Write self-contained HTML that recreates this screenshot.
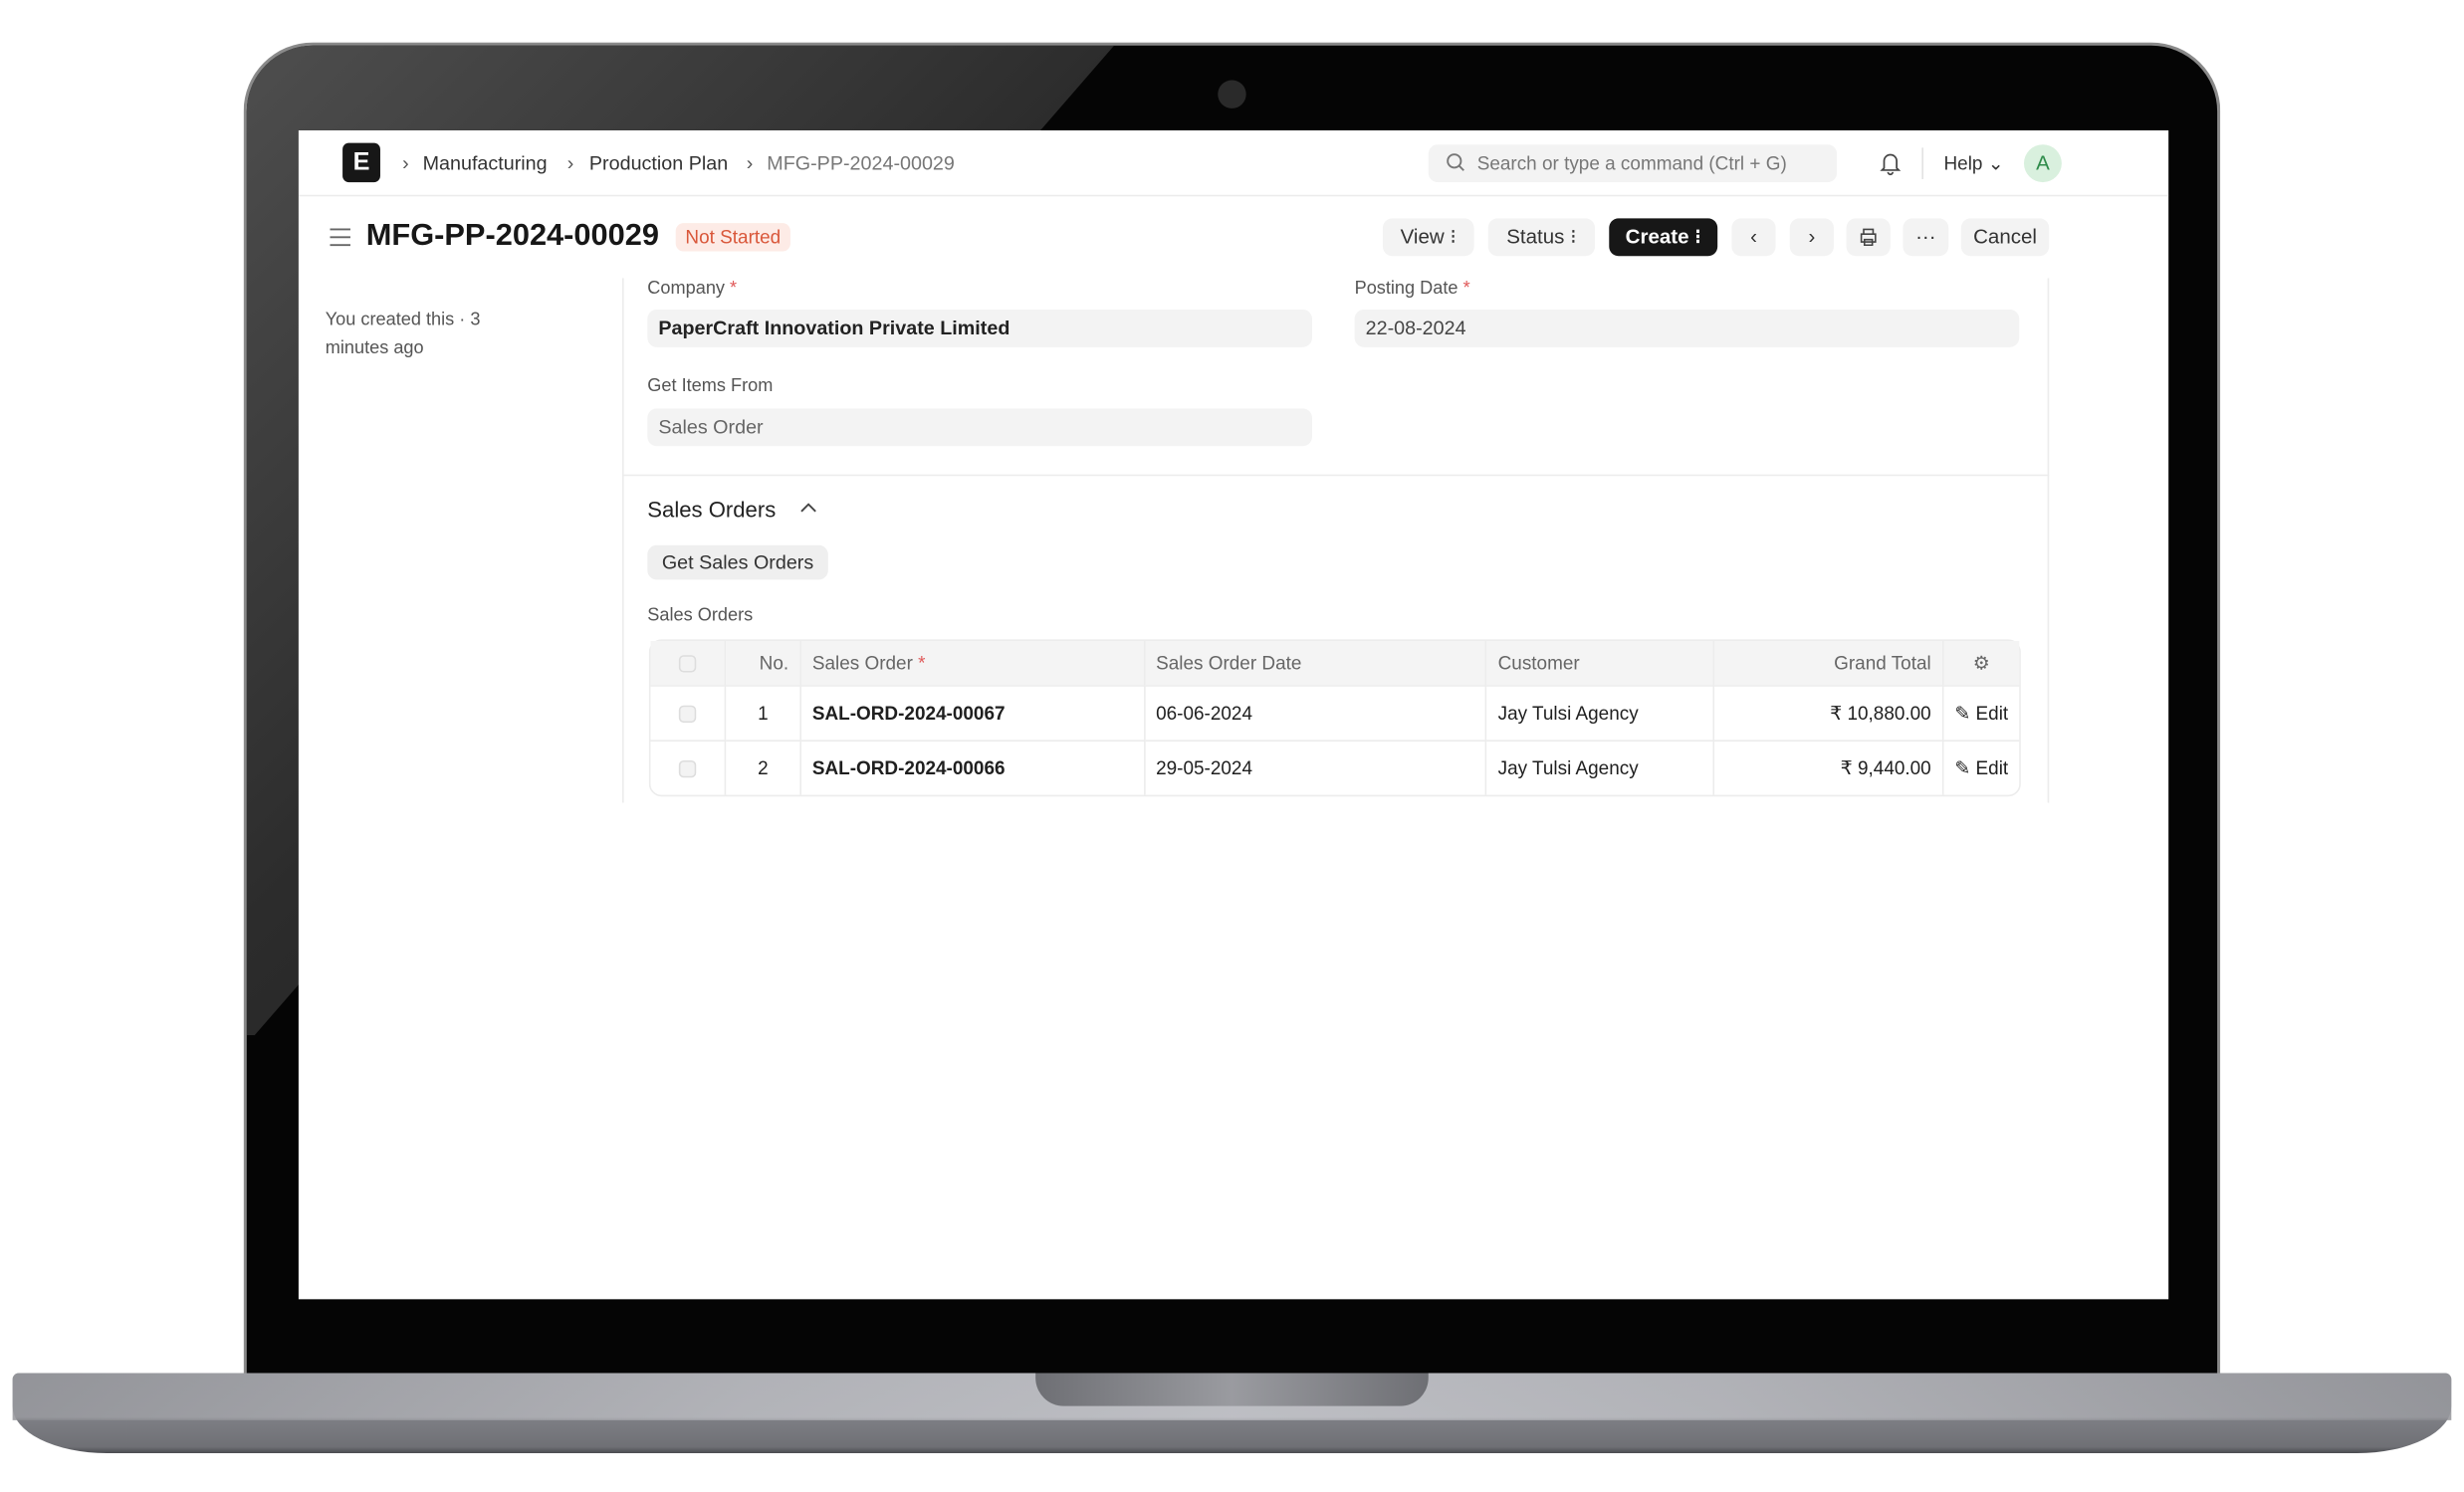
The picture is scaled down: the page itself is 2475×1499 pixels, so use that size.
<!DOCTYPE html>
<html><head><meta charset="utf-8"><style>
*{margin:0;padding:0;box-sizing:border-box}
html,body{width:2475px;height:1499px;overflow:hidden;background:#fff}
#w{position:absolute;left:0;top:0;width:1568px;height:950px;transform:scale(1.5784);transform-origin:0 0;font-family:"Liberation Sans",sans-serif;}
.a{position:absolute}
.bz{left:155px;top:27px;width:1258px;height:860px;background:#050505;border-radius:44px 44px 0 0;border:2px solid #8a8a8a;border-bottom:none;overflow:hidden}
.gl{left:0;top:0;width:700px;height:700px;background:linear-gradient(135deg,#4e4e4e 0%,#2c2c2c 40%,#141414 100%);clip-path:polygon(0 0,552px 0,5px 630px,0 630px)}
.scr{left:190px;top:83px;width:1190px;height:744px;background:#fff;overflow:hidden;color:#1f1f1f}
.t{position:absolute;white-space:nowrap;font-size:12.5px;line-height:1}
.btn{position:absolute;top:56px;height:24px;background:#f3f3f3;border-radius:6px;font-size:13px;line-height:24px;color:#333;text-align:center}
.inp{position:absolute;height:24px;background:#f3f3f3;border-radius:6px;font-size:12.5px;line-height:24px;padding-left:7px}
.lbl{position:absolute;font-size:11.5px;color:#555;white-space:nowrap}
.lbl b{font-weight:normal;color:#e05a5a}
table{position:absolute;left:223px;top:324px;width:873px;border-collapse:separate;border-spacing:0;border:1px solid #ececec;border-radius:8px;font-size:12px}
td{height:35px;border-right:1px solid #ececec;border-top:1px solid #ececec;padding:0 7px;white-space:nowrap}
tr.h td{height:28px;background:#f4f4f4;color:#666;border-top:none}
td:last-child{border-right:none}
.cb{display:inline-block;width:11px;height:11px;border:1px solid #ddd;border-radius:3px;background:#f3f3f3;vertical-align:middle}
</style></head><body><div id="w">
<div class="a bz"><div class="a gl"></div></div>
<div class="a" style="left:775px;top:51px;width:18px;height:18px;border-radius:50%;background:#2a2a2a"></div>
<div class="a" style="left:8px;top:874px;width:1552px;height:51px;border-radius:4px 4px 60px 60px/4px 4px 30px 30px;background:linear-gradient(180deg,#a9aab0 0%,#b4b5bb 55%,#7d7e84 58%,#6f7075 92%,#4a4b50 100%)"></div>
<div class="a" style="left:8px;top:874px;width:1552px;height:30px;background:linear-gradient(90deg,#8d8e93 0%,#b2b3b8 30%,#c0c1c6 50%,#b2b3b8 70%,#8d8e93 100%);opacity:.8;border-radius:4px 4px 0 0"></div>
<div class="a" style="left:659px;top:874px;width:250px;height:21px;border-radius:0 0 18px 18px;background:linear-gradient(90deg,#6e6f74,#9a9ba0 50%,#6e6f74)"></div>
<div class="a scr">
 <div class="a" style="left:0;top:41px;width:1190px;height:1px;background:#ececec"></div>
 <div class="a" style="left:28px;top:8px;width:24px;height:25px;background:#171717;border-radius:4px;color:#fff;font-weight:bold;font-size:16px;text-align:center;line-height:25px">E</div>
 <div class="t" style="left:66px;top:15px;color:#555">›</div>
 <div class="t" style="left:79px;top:15px;color:#333">Manufacturing</div>
 <div class="t" style="left:171px;top:15px;color:#555">›</div>
 <div class="t" style="left:185px;top:15px;color:#333">Production Plan</div>
 <div class="t" style="left:285px;top:15px;color:#555">›</div>
 <div class="t" style="left:298px;top:15px;color:#777">MFG-PP-2024-00029</div>
 <div class="a" style="left:719px;top:9px;width:260px;height:24px;background:#f3f3f3;border-radius:6px"></div>
 <svg class="a" style="left:730px;top:14px" width="13" height="13" viewBox="0 0 13 13"><circle cx="5.5" cy="5.5" r="4.2" fill="none" stroke="#777" stroke-width="1.2"/><path d="M8.7 8.7L11.5 11.5" stroke="#777" stroke-width="1.2"/></svg>
 <div class="t" style="left:750px;top:15px;color:#777;font-size:12px">Search or type a command (Ctrl + G)</div>
 <svg class="a" style="left:1006px;top:13px" width="14" height="16" viewBox="0 0 14 16"><path d="M3 11V6.5a4 4 0 0 1 8 0V11l1.3 1.3H1.7z M5.5 13.5a1.5 1.5 0 0 0 3 0" fill="none" stroke="#444" stroke-width="1.1"/></svg>
 <div class="a" style="left:1033px;top:11px;width:1px;height:20px;background:#e2e2e2"></div>
 <div class="t" style="left:1047px;top:15px;color:#333;font-size:12px">Help ⌄</div>
 <div class="a" style="left:1098px;top:9px;width:24px;height:24px;border-radius:50%;background:#d9f0de;color:#2e8b4a;font-size:13px;text-align:center;line-height:24px">A</div>
 <svg class="a" style="left:20px;top:62px" width="13" height="12" viewBox="0 0 13 12"><path d="M0 1h13M0 6h13M0 11h13" stroke="#666" stroke-width="1.2"/></svg>
 <div class="t" style="left:43px;top:58px;font-size:19.5px;font-weight:bold;color:#171717">MFG-PP-2024-00029</div>
 <div class="a" style="left:240px;top:59px;width:73px;height:18px;background:#fdebe6;border-radius:5px;color:#d9573a;font-size:12px;line-height:18px;text-align:center">Not Started</div>
 <div class="btn" style="left:690px;width:58px">View ⁝</div>
 <div class="btn" style="left:757px;width:68px">Status ⁝</div>
 <div class="btn" style="left:834px;width:69px;background:#171717;color:#fff;font-weight:bold">Create ⁝</div>
 <div class="btn" style="left:912px;width:28px">‹</div>
 <div class="btn" style="left:949px;width:28px">›</div>
 <div class="btn" style="left:985px;width:28px"><svg style="margin-top:6px" width="12" height="12" viewBox="0 0 12 12"><path d="M3 4V1h6v3M1.5 4h9v5h-9zM3.5 7.5h5v3.5h-5z" fill="#f3f3f3" stroke="#444" stroke-width="1"/></svg></div>
 <div class="btn" style="left:1021px;width:29px">···</div>
 <div class="btn" style="left:1058px;width:56px">Cancel</div>
 <div class="t" style="left:17px;top:112px;font-size:11.5px;color:#555;line-height:18px">You created this · 3<br>minutes ago</div>
 <div class="a" style="left:206px;top:94px;width:1px;height:334px;background:#ececec"></div>
 <div class="a" style="left:1113px;top:94px;width:1px;height:334px;background:#ececec"></div>
 <div class="a" style="left:206px;top:219px;width:908px;height:1px;background:#ececec"></div>
 <div class="lbl" style="left:222px;top:95px">Company <b>*</b></div>
 <div class="inp" style="left:222px;top:114px;width:423px;font-weight:bold;color:#222">PaperCraft Innovation Private Limited</div>
 <div class="lbl" style="left:672px;top:95px">Posting Date <b>*</b></div>
 <div class="inp" style="left:672px;top:114px;width:423px;color:#444">22-08-2024</div>
 <div class="lbl" style="left:222px;top:157px">Get Items From</div>
 <div class="inp" style="left:222px;top:177px;width:423px;color:#666">Sales Order</div>
 <div class="t" style="left:222px;top:234px;font-size:14px;color:#222">Sales Orders</div>
 <svg class="a" style="left:319px;top:236px" width="11" height="8" viewBox="0 0 11 8"><path d="M1 6.5L5.5 2L10 6.5" fill="none" stroke="#444" stroke-width="1.2"/></svg>
 <div class="a" style="left:222px;top:264px;width:115px;height:22px;background:#efefef;border-radius:6px;font-size:12.5px;line-height:22px;text-align:center;color:#333">Get Sales Orders</div>
 <div class="lbl" style="left:222px;top:303px">Sales Orders</div>
 <table>
  <tr class="h"><td style="width:48px;text-align:center"><span class="cb"></span></td><td style="width:48px;text-align:right">No.</td><td style="width:219px">Sales Order <span style="color:#e05a5a">*</span></td><td style="width:218px">Sales Order Date</td><td style="width:145px">Customer</td><td style="width:146px;text-align:right">Grand Total</td><td style="text-align:center">⚙</td></tr>
  <tr><td style="text-align:center"><span class="cb"></span></td><td style="text-align:right;padding-right:20px">1</td><td style="font-weight:bold">SAL-ORD-2024-00067</td><td>06-06-2024</td><td>Jay Tulsi Agency</td><td style="text-align:right">₹ 10,880.00</td><td>✎ Edit</td></tr>
  <tr><td style="text-align:center"><span class="cb"></span></td><td style="text-align:right;padding-right:20px">2</td><td style="font-weight:bold">SAL-ORD-2024-00066</td><td>29-05-2024</td><td>Jay Tulsi Agency</td><td style="text-align:right">₹ 9,440.00</td><td>✎ Edit</td></tr>
 </table>
</div>
</div></body></html>
